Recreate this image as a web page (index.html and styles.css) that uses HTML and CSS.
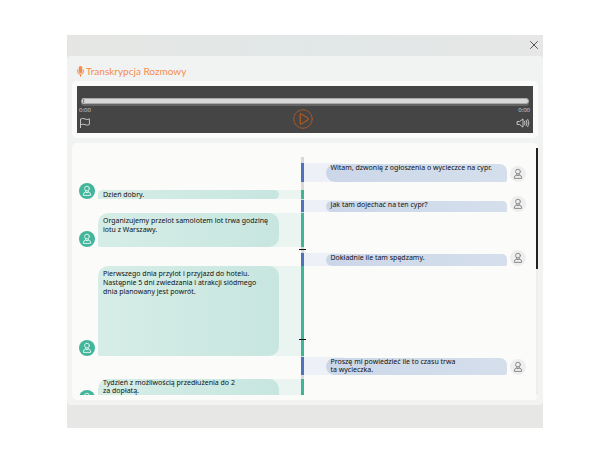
FILE: index.html
```html
<!DOCTYPE html>
<html lang="pl">
<head>
    <meta charset="UTF-8">
    <meta name="viewport" content="width=device-width, initial-scale=1.0">
    <title>Transkrypcja Rozmowy</title>
    <link rel="stylesheet" href="styles.css">
</head>
<body>
    <svg class="sprite">
        <symbol id="user" viewBox="0 0 16 16">
            <circle cx="8" cy="5.6" r="2.4"/>
            <path d="M6.8 7.8 V9 M9.2 7.8 V9 M4.4 12 V11 Q4.6 9.6 6.4 9.2 Q8 10.2 9.6 9.2 Q11.4 9.6 11.6 11 V12 Z"/>
        </symbol>
    </svg>

    <div class="modal">
        <div class="modal-header">
            <button class="close" aria-label="Zamknij">
                <svg viewBox="0 0 8 8"><path d="M0.5 0.5 L7.5 7.5 M7.5 0.5 L0.5 7.5"/></svg>
            </button>
        </div>

        <div class="modal-body">
            <h1>
                <svg class="mic" viewBox="0 0 7 11">
                    <rect x="1.7" y="0" width="3.6" height="7.2" rx="1.8"/>
                    <path d="M0.6 4 V5.5 Q0.6 8.4 3.5 8.4 Q6.4 8.4 6.4 5.5 V4 M3.5 8.4 V10.4"/>
                </svg>
                Transkrypcja Rozmowy
            </h1>

            <div class="panel">
                <div class="player">
                    <input class="progress" type="range" min="0" max="100" value="0" aria-label="Pozycja nagrania">
                    <div class="controls">
                        <div class="side">
                            <span class="time">0:00</span>
                            <button class="icon" aria-label="Oznacz">
                                <svg viewBox="0 0 14 10"><path d="M1.5 10 V1 Q3.8 -0.2 6 1 Q8.2 2 10.4 0.9 V6.6 Q8.2 7.8 6 6.6 Q3.8 5.6 1.5 6.8"/></svg>
                            </button>
                        </div>
                        <button class="play" aria-label="Odtwórz">
                            <svg viewBox="0 0 20 20"><circle cx="10" cy="10" r="9.3"/><path class="triangle" d="M7.2 5.2 Q7.2 4.2 8.1 4.8 L15.2 9.3 Q16.2 10 15.2 10.7 L8.1 15.2 Q7.2 15.8 7.2 14.8 Z"/></svg>
                        </button>
                        <div class="side right">
                            <span class="time">0:00</span>
                            <button class="icon" aria-label="Głośność">
                                <svg viewBox="0 0 14 10"><path d="M1.5 3.5 H3.6 L7 0.9 V9.1 L3.6 6.5 H1.5 Z M8.6 3.4 Q9.7 5 8.6 6.6 M10.2 2.4 Q12 5 10.2 7.6 M11.8 1.4 Q14.2 5 11.8 8.6"/></svg>
                            </button>
                        </div>
                    </div>
                </div>
            </div>

            <div class="panel transcript">
                <div class="messages">
                    <div class="pause" style="height: 6px"></div>
                    <div class="row client" style="height: 19px">
                        <p>Witam, dzwonię z ogłoszenia o wycieczce na cypr.</p>
                        <svg class="avatar"><use href="#user"/></svg>
                    </div>
                    <div class="pause" style="height: 8px"></div>
                    <div class="row agent" style="height: 9px">
                        <svg class="avatar"><use href="#user"/></svg>
                        <p>Dzień dobry.</p>
                    </div>
                    <div class="pause" style="height: 1px"></div>
                    <div class="row client" style="height: 12px">
                        <p>Jak tam dojechać na ten cypr?</p>
                        <svg class="avatar"><use href="#user"/></svg>
                    </div>
                    <div class="pause" style="height: 1px"></div>
                    <div class="row agent long" style="height: 34px">
                        <svg class="avatar"><use href="#user"/></svg>
                        <p>Organizujemy przelot samolotem lot trwa godzinę<br>lotu z Warszawy.</p>
                    </div>
                    <div class="pause mark" style="height: 6px"></div>
                    <div class="row client" style="height: 13px">
                        <p>Dokładnie ile tam spędzamy.</p>
                        <svg class="avatar"><use href="#user"/></svg>
                    </div>
                    <div class="row agent long tick" style="height: 90px">
                        <svg class="avatar"><use href="#user"/></svg>
                        <p>Pierwszego dnia przylot i przyjazd do hotelu.<br>Następnie 5 dni zwiedzania i atrakcji siódmego<br>dnia planowany jest powrót.</p>
                    </div>
                    <div class="pause" style="height: 1px"></div>
                    <div class="row client" style="height: 18px">
                        <p>Proszę mi powiedzieć ile to czasu trwa<br>ta wycieczka.</p>
                        <svg class="avatar"><use href="#user"/></svg>
                    </div>
                    <div class="pause" style="height: 4px"></div>
                    <div class="row agent dense" style="height: 27px">
                        <svg class="avatar"><use href="#user"/></svg>
                        <p>Tydzień z możliwością przedłużenia do 2<br>za dopłatą.</p>
                    </div>
                </div>
                <div class="scrollbar"><div class="thumb" style="height: 49%"></div></div>
            </div>
        </div>

        <div class="modal-footer"></div>
    </div>
</body>
</html>
```

FILE: styles.css
```css
* {
    box-sizing: border-box;
}
body {
    margin: 0;
    padding: 35px 66px 30px 67px;
    background: #fff;
    font-family: "Noto Sans", "Open Sans", sans-serif;
    color: #111;
}
button {
    display: block;
    padding: 0;
    border: none;
    background: none;
    cursor: pointer;
}
svg {
    display: block;
    fill: none;
    stroke-linecap: round;
    stroke-linejoin: round;
}
.sprite {
    display: none;
}
.modal {
    background: linear-gradient(90deg, #e5e6e3, #e1e7e7 50%, #e6e7e6);
}
.modal-header {
    display: flex;
    justify-content: flex-end;
    align-items: center;
    height: 21px;
    padding: 0 5px 2px 0;
}
.close svg {
    width: 8px;
    height: 8px;
    stroke: #555;
    stroke-width: 1;
}
.modal-body {
    padding: 5px;
    border-radius: 4px;
    background: linear-gradient(#f0f3f2, #f3f3f2);
}
.modal-footer {
    height: 23px;
    background: #e7e7e5;
}
h1 {
    display: flex;
    align-items: center;
    gap: 2px;
    height: 20px;
    margin: 0;
    padding-left: 5px;
    font-family: Lato, sans-serif;
    font-size: 10px;
    font-weight: 400;
    color: #f58b4c;
}
.mic {
    width: 7px;
    height: 11px;
    fill: none;
    stroke: #f58b4c;
}
.mic rect {
    fill: #f58b4c;
    stroke: none;
}
.panel {
    padding: 5px;
    border-radius: 5px;
    background: #fbfbfa;
}

/* player */
.player {
    padding: 12px 4px 4px;
    background: #454545;
}
.progress {
    display: block;
    appearance: none;
    width: 100%;
    height: 6px;
    margin: 0;
    border: 1px solid #aaa;
    border-radius: 3px;
    background: #d8d8d8;
    box-shadow: 0 2px 0 #636463;
}
.progress::-webkit-slider-thumb {
    appearance: none;
    width: 3px;
    height: 6px;
    border: 1px solid #ccc;
    border-radius: 2px;
    background: #888;
}
.controls {
    display: grid;
    grid-template-columns: 1fr 20px 1fr;
    padding-top: 2px;
    margin: 0 0 0 -4px;
}
.side {
    display: flex;
    flex-direction: column;
    align-items: flex-start;
    gap: 4px;
    padding-left: 2px;
}
.side.right {
    align-items: flex-end;
    padding: 0;
    margin-right: -1px;
}
.time {
    font-family: "Open Sans", sans-serif;
    font-size: 6px;
    line-height: 8px;
    color: #ddd;
}
.icon svg {
    width: 14px;
    height: 10px;
    stroke: #c4c4c4;
    stroke-width: 1;
}
.play {
    margin-top: 3px;
    height: 20px;
}
.play svg {
    width: 20px;
    height: 20px;
    stroke: #a8572a;
    stroke-width: 1;
}
.play .triangle {
    stroke: #d2600f;
}

/* transcript */
.transcript {
    position: relative;
    margin-top: 5px;
    padding: 5px 12px 5px 7px;
}
.messages {
    height: 247px;
    padding-top: 9px;
    overflow: hidden;
}
.pause {
    position: relative;
    width: 3px;
    margin: 0 auto;
    background: #d9d9d9;
}
.row {
    display: flex;
    position: relative;
    align-items: flex-end;
    gap: 3px;
    width: 50%;
}
.row.agent {
    padding-right: 24px;
    background: linear-gradient(#eaf4f1, #eaf4f1) right / 44px 100% no-repeat;
}
.row.client {
    margin-left: auto;
    padding-left: 23px;
    background: linear-gradient(#edf1f7, #edf1f7) left / 40px 100% no-repeat;
}
/* coloured piece of the time line */
.row::before {
    content: "";
    position: absolute;
    top: 0;
    bottom: 0;
    width: 3px;
    background: #3fb596;
    right: -1px;
}
.row.client::before {
    right: auto;
    left: -2px;
    background: #4d73ba;
}
.mark::after,
.tick::after {
    content: "";
    position: absolute;
    top: 2px;
    left: -2px;
    width: 7px;
    height: 1px;
    background: #111;
}
.tick::after {
    top: 73px;
    left: auto;
    right: -3px;
}
.row p {
    flex: 1;
    align-self: stretch;
    margin: 0;
    padding: 0 5px;
    font-size: 7px;
    line-height: 9px;
    white-space: nowrap;
}
.agent p {
    border-radius: 8px 8px 8px 2px;
    background: linear-gradient(90deg, #d6ede7, #c7e6df);
}
.client p {
    margin-top: 1px;
    border-radius: 10px 8px 2px 10px;
    background: linear-gradient(90deg, #cbd7e9, #d5dfec);
    line-height: 8px;
}
.row.long p {
    padding-top: 3px;
    border-radius: 10px 10px 10px 2px;
}
.row.dense p {
    border-radius: 10px 10px 10px 2px;
    line-height: 8px;
}
.avatar {
    flex: none;
    width: 16px;
    height: 16px;
    border-radius: 50%;
    background: #43b59b;
    stroke: #d9f2ec;
    stroke-width: 1;
}
.client .avatar {
    background: #eeeeee;
    stroke: #8a8a8a;
}
.scrollbar {
    position: absolute;
    top: 5px;
    right: 0;
    bottom: 5px;
    width: 2px;
    background: #eeeeee;
}
.thumb {
    background: #222;
}
```
